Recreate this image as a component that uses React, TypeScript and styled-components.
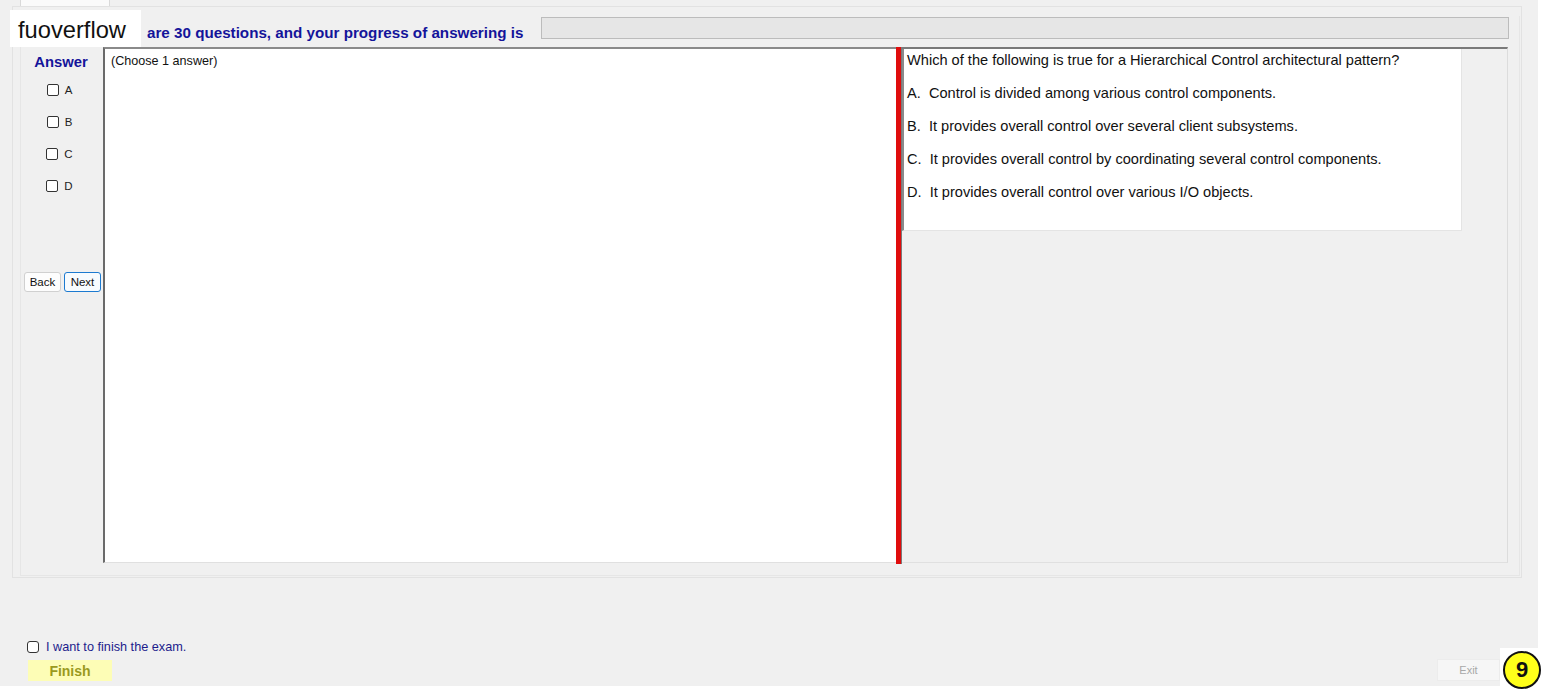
import React from 'react'
import styled, { createGlobalStyle } from 'styled-components'

const Global = createGlobalStyle`
  html, body { margin: 0; padding: 0; background: #ffffff; }
  body { font-family: 'Liberation Sans', Arial, sans-serif; }
`

const choices = ['A', 'B', 'C', 'D']
const options = [
    'A.  Control is divided among various control components.',
    'B.  It provides overall control over several client subsystems.',
    'C.  It provides overall control by coordinating several control components.',
    'D.  It provides overall control over various I/O objects.',
]

export default function App() {
    return (
        <Page>
            <Global />
            <Window>
                <TabStrip>
                    <Tab />
                </TabStrip>
                <TabPage>
                    <Group>
                        <HeaderRow>
                            <ProgressText>are 30 questions, and your progress of answering is</ProgressText>
                            <ProgressBar />
                        </HeaderRow>
                        <MainRow>
                            <AnswerCol>
                                <AnswerTitle>Answer</AnswerTitle>
                                {choices.map(c => (
                                    <ChoiceRow key={c}>
                                        <Box />
                                        <span>{c}</span>
                                    </ChoiceRow>
                                ))}
                                <NavRow>
                                    <SmallButton>Back</SmallButton>
                                    <SmallButton $focused>Next</SmallButton>
                                </NavRow>
                            </AnswerCol>
                            <ChoiceArea>(Choose 1 answer)</ChoiceArea>
                            <Splitter />
                            <QuestionPanel>
                                <QuestionBox>
                                    <p>Which of the following is true for a Hierarchical Control architectural pattern?</p>
                                    {options.map(o => (
                                        <p key={o}>{o}</p>
                                    ))}
                                </QuestionBox>
                            </QuestionPanel>
                        </MainRow>
                    </Group>
                </TabPage>
                <Footer>
                    <FinishCol>
                        <FinishCheck>
                            <Box $round />
                            <span>I want to finish the exam.</span>
                        </FinishCheck>
                        <FinishButton>Finish</FinishButton>
                    </FinishCol>
                    <ExitButton>Exit</ExitButton>
                </Footer>
            </Window>
            <Watermark>fuoverflow</Watermark>
            <Badge>
                <span>9</span>
            </Badge>
        </Page>
    )
}

const Page = styled.div`
    position: relative;
    width: 1542px;
    height: 690px;
    background: #ffffff;
    overflow: hidden;
`

const Window = styled.div`
    width: 1538px;
    height: 686px;
    background: #f0f0f0;
    display: flex;
    flex-direction: column;
`

const TabStrip = styled.div`
    height: 6px;
    padding-left: 20px;
    display: flex;
`

const Tab = styled.div`
    width: 90px;
    height: 6px;
    background: #fafafa;
    border: 1px solid #d9d9d9;
    border-top: none;
    border-bottom: none;
    box-sizing: border-box;
`

const TabPage = styled.div`
    margin-left: 12px;
    width: 1510px;
    height: 572px;
    box-sizing: border-box;
    border: 1px solid #e2e2e2;
    padding: 9px 1px 1px 7px;
`

const Group = styled.div`
    width: 1500px;
    height: 560px;
    box-sizing: border-box;
    border: 1px solid #e6e6e6;
    border-top: none;
    display: flex;
    flex-direction: column;
`

const HeaderRow = styled.div`
    height: 31px;
    display: flex;
    align-items: flex-start;
    padding-top: 1px;
    box-sizing: border-box;
`

const ProgressText = styled.div`
    margin-left: 126px;
    padding-top: 7px;
    width: 394px;
    font-size: 15.2px;
    font-weight: bold;
    color: #14149a;
    white-space: nowrap;
`

const ProgressBar = styled.div`
    width: 968px;
    height: 22px;
    box-sizing: border-box;
    background: #e6e6e6;
    border: 1px solid #bcbcbc;
`

const MainRow = styled.div`
    display: flex;
    height: 516px;
    margin-left: 1px;
`

const AnswerCol = styled.div`
    width: 81px;
    display: flex;
    flex-direction: column;
    align-items: center;
    padding-top: 7px;
    box-sizing: border-box;
`

const AnswerTitle = styled.div`
    font-size: 14.8px;
    font-weight: bold;
    color: #14149a;
    height: 20px;
    margin-bottom: 9px;
    margin-right: 3px;
`

const ChoiceRow = styled.div`
    display: flex;
    align-items: center;
    gap: 6px;
    height: 13px;
    margin-bottom: 19px;
    font-size: 11.5px;
    color: #222;
    margin-right: 6px;
`

const Box = styled.span<{ $round?: boolean }>`
    display: inline-block;
    width: 12px;
    height: 12px;
    box-sizing: border-box;
    border: 1px solid #333;
    border-radius: ${p => (p.$round ? 3 : 2)}px;
    background: #ffffff;
`

const NavRow = styled.div`
    display: flex;
    gap: 3px;
    margin-top: 61px;
`

const SmallButton = styled.div<{ $focused?: boolean }>`
    width: 37px;
    height: 20px;
    box-sizing: border-box;
    display: flex;
    align-items: center;
    justify-content: center;
    font-size: 11.5px;
    color: #111;
    background: ${p => (p.$focused ? '#f7fbfe' : '#fdfdfd')};
    border: 1px solid ${p => (p.$focused ? '#1c7ad0' : '#d0d0d0')};
    border-radius: 3px;
`

const ChoiceArea = styled.div`
    width: 793px;
    box-sizing: border-box;
    background: #ffffff;
    border-left: 2px solid #6a6a6a;
    border-top: 2px solid #8a8a8a;
    border-bottom: 1px solid #e0e0e0;
    padding: 5px 6px;
    font-size: 12.6px;
    color: #111;
`

const Splitter = styled.div`
    width: 6px;
    margin-bottom: -1px;
    background: #e00d0d;
    border-right: 1px solid #7a7a7a;
    box-sizing: border-box;
`

const QuestionPanel = styled.div`
    width: 606px;
    box-sizing: border-box;
    border-top: 2px solid #7a7a7a;
    border-bottom: 1px solid #e0e0e0;
    border-right: 1px solid #dcdcdc;
    background: #f0f0f0;
`

const QuestionBox = styled.div`
    width: 560px;
    height: 182px;
    box-sizing: border-box;
    background: #ffffff;
    border-left: 2px solid #8a8a8a;
    border-bottom: 1px solid #e4e4e4;
    border-right: 1px solid #e4e4e4;
    padding: 3px 3px 0 3px;
    font-size: 14.6px;
    color: #111;
    p {
        margin: 0 0 17px 0;
        line-height: 16px;
        white-space: pre;
    }
`

const Footer = styled.div`
    flex: 1;
    display: flex;
    justify-content: space-between;
    align-items: flex-end;
    padding: 0 38px 5px 27px;
`

const FinishCol = styled.div`
    display: flex;
    flex-direction: column;
    gap: 6px;
`

const FinishCheck = styled.div`
    display: flex;
    align-items: center;
    gap: 7px;
    font-size: 12.7px;
    color: #1c1c8c;
`

const FinishButton = styled.div`
    margin-left: 1px;
    width: 84px;
    height: 21px;
    display: flex;
    align-items: center;
    justify-content: center;
    background: #fdfdb6;
    color: #9a9a1e;
    font-size: 14px;
    font-weight: bold;
`

const ExitButton = styled.div`
    width: 63px;
    height: 22px;
    box-sizing: border-box;
    display: flex;
    align-items: center;
    justify-content: center;
    background: #f6f6f6;
    border: 1px solid #ececec;
    font-size: 11px;
    color: #a8a8a8;
`

const Watermark = styled.div`
    position: absolute;
    left: 10px;
    top: 10px;
    width: 131px;
    height: 37px;
    background: #ffffff;
    display: flex;
    align-items: center;
    padding: 4px 0 0 8px;
    box-sizing: border-box;
    font-size: 23.7px;
    color: #111;
`

const Badge = styled.div`
    position: absolute;
    right: 0;
    bottom: 0;
    width: 42px;
    height: 42px;
    background: #ffffff;
    display: flex;
    align-items: center;
    justify-content: center;
    span {
        width: 38px;
        height: 38px;
        box-sizing: border-box;
        border-radius: 50%;
        background: #ffff1a;
        border: 2px solid #111;
        display: flex;
        align-items: center;
        justify-content: center;
        font-size: 22px;
        font-weight: bold;
        color: #111;
        margin: 2px 0 0 2px;
    }
`
